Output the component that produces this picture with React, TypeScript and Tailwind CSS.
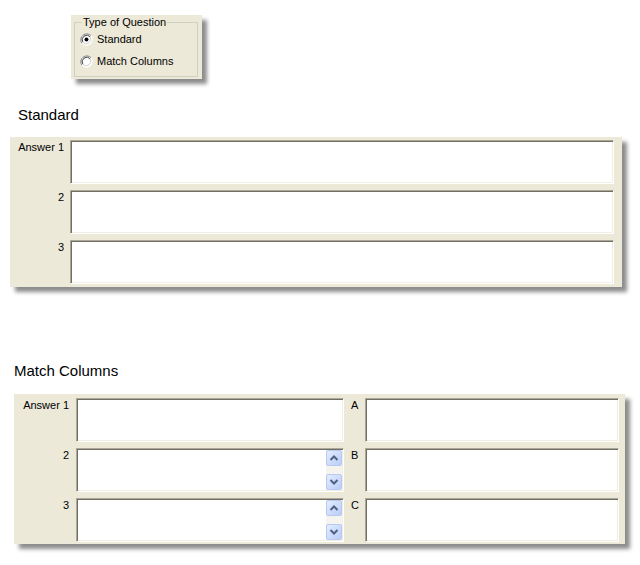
import React from "react";

const font = { fontFamily: '"Liberation Sans", Arial, sans-serif' };

function Radio({ checked }: { checked?: boolean }) {
  return (
    <svg width="13" height="13" viewBox="0 0 13 13">
      <circle cx="6.5" cy="6.5" r="6" fill="#fff" />
      <path d="M11.2 2.8 A6 6 0 0 0 1.8 10.2" stroke="#808080" strokeWidth="1" fill="none" />
      <path d="M10.2 3.8 A4.6 4.6 0 0 0 2.8 9.2" stroke="#404040" strokeWidth="1" fill="none" />
      <path d="M1.8 10.2 A6 6 0 0 0 11.2 2.8" stroke="#ffffff" strokeWidth="1" fill="none" />
      <path d="M2.8 9.2 A4.6 4.6 0 0 0 10.2 3.8" stroke="#d4d0c8" strokeWidth="1" fill="none" />
      {checked && <circle cx="6.5" cy="6.5" r="2" fill="#000" />}
    </svg>
  );
}

function Box({ w, scroll }: { w: string; scroll?: boolean }) {
  return (
    <div
      className={`${w} h-[44px] bg-white border border-t-[#ACA899] border-l-[#ACA899] border-b-white border-r-white shadow-[inset_1px_1px_0_#716F64,inset_-1px_-1px_0_#F1EFE2] flex justify-end p-[1px]`}
    >
      {scroll && (
        <div className="w-[16px] h-full bg-[#F5F4EE] flex flex-col justify-between">
          <ScrollBtn up />
          <ScrollBtn />
        </div>
      )}
    </div>
  );
}

function ScrollBtn({ up }: { up?: boolean }) {
  return (
    <div className="w-[16px] h-[16px] rounded-[2px] border border-[#B7CAF3] bg-gradient-to-br from-[#E4ECFE] to-[#BACDF8] flex items-center justify-center">
      <svg width="10" height="8" viewBox="0 0 10 8">
        <path
          d={up ? "M1.5 6 L5 2.5 L8.5 6" : "M1.5 2 L5 5.5 L8.5 2"}
          stroke="#4D6185"
          strokeWidth="2"
          fill="none"
        />
      </svg>
    </div>
  );
}

export default function App() {
  return (
    <div className="w-[640px] h-[565px] bg-white text-black overflow-hidden flex flex-col" style={font}>
      {/* group box */}
      <div className="ml-[71px] mt-[15px] w-[131px] h-[64px] bg-[#ECE9D8] shadow-[5px_5px_4px_rgba(0,0,0,0.45)] flex flex-col">
        <fieldset className="ml-[3px] mt-[1px] w-[124px] h-[61px] border border-[#D0D0BF] p-0 m-0 min-w-0">
          <legend className="ml-[7px] px-[1px] text-[11px] leading-[13px]">Type of Question</legend>
          <div className="pl-[5px] mt-[1px] flex flex-col gap-[4px]">
            <div className="h-[18px] flex items-center gap-[4px] text-[11px]">
              <Radio checked />
              <span>Standard</span>
            </div>
            <div className="h-[18px] flex items-center gap-[4px] text-[11px]">
              <Radio />
              <span>Match Columns</span>
            </div>
          </div>
        </fieldset>
      </div>

      {/* Standard */}
      <div className="ml-[18px] mt-[27px] text-[15px] leading-[17px]">Standard</div>
      <div className="ml-[10px] mt-[14px] w-[612px] bg-[#ECE9D8] pt-[3px] pb-[3px] shadow-[5px_5px_4px_rgba(0,0,0,0.45)] flex flex-col gap-[6px]">
        {["Answer 1", "2", "3"].map((l) => (
          <div key={l} className="flex">
            <div className="w-[60px] pr-[6px] pt-[1px] text-right text-[11px] leading-[13px]">{l}</div>
            <Box w="w-[544px]" />
          </div>
        ))}
      </div>

      {/* Match Columns */}
      <div className="ml-[14px] mt-[75px] text-[15px] leading-[17px]">Match Columns</div>
      <div className="ml-[14px] mt-[15px] w-[611px] bg-[#ECE9D8] pt-[4px] pb-[2px] shadow-[5px_5px_4px_rgba(0,0,0,0.45)] flex flex-col gap-[6px]">
        {[
          ["Answer 1", "A", false],
          ["2", "B", true],
          ["3", "C", true],
        ].map(([l, r, s]) => (
          <div key={l as string} className="flex">
            <div className="w-[62px] pr-[7px] pt-[1px] text-right text-[11px] leading-[13px]">{l}</div>
            <Box w="w-[268px]" scroll={s as boolean} />
            <div className="w-[21px] pl-[7px] pt-[1px] text-[11px] leading-[13px]">{r}</div>
            <Box w="w-[254px]" />
          </div>
        ))}
      </div>
    </div>
  );
}
